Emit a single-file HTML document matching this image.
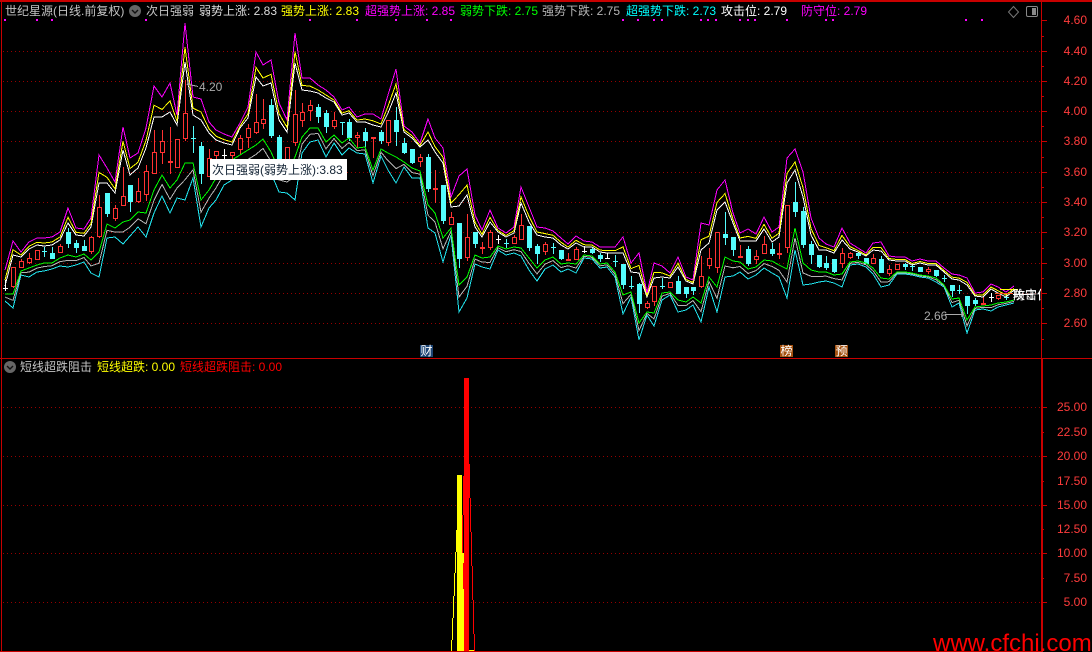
<!DOCTYPE html>
<html><head><meta charset="utf-8"><style>
html,body{margin:0;padding:0;background:#000}
#w{position:relative;width:1092px;height:652px;overflow:hidden;background:#000;font:12px/14px "Liberation Sans","Noto Sans CJK SC",sans-serif}
svg{position:absolute;left:0;top:0}
.d{position:absolute;left:3px;width:1038px;height:1px;background:repeating-linear-gradient(90deg,#960000 0,#960000 1px,#000 1px,#000 4px)}
.t{position:absolute;white-space:pre;line-height:14px;height:14px}
.a{position:absolute;left:1044px;width:43px;text-align:right;color:#ff3c3c;line-height:14px}
.b{position:absolute;width:13px;height:12px;line-height:12px;color:#fff;text-align:center;font-size:12px}
</style></head><body><div id="w">
<div class="d" style="top:51px"></div><div class="d" style="top:81px"></div><div class="d" style="top:111px"></div><div class="d" style="top:141px"></div><div class="d" style="top:172px"></div><div class="d" style="top:202px"></div><div class="d" style="top:232px"></div><div class="d" style="top:263px"></div><div class="d" style="top:293px"></div><div class="d" style="top:323px"></div><div class="d" style="top:407px"></div><div class="d" style="top:456px"></div><div class="d" style="top:505px"></div><div class="d" style="top:553px"></div><div class="d" style="top:602px"></div>
<svg width="1092" height="652" viewBox="0 0 1092 652" shape-rendering="crispEdges">
<g id="g"></g>
<g fill="#ff0">
<rect x="457" y="475" width="5" height="177"/><rect x="456" y="530" width="1" height="22"/><rect x="455" y="552" width="1" height="21"/><rect x="454" y="573" width="1" height="23"/><rect x="453" y="596" width="1" height="22"/><rect x="452" y="618" width="1" height="22"/><rect x="451" y="640" width="1" height="11"/><rect x="462" y="553" width="2" height="99"/><rect x="469" y="650" width="5" height="2"/>
</g>
<g fill="#f00">
<rect x="464" y="378" width="5" height="274"/><rect x="469" y="464" width="1" height="34"/><rect x="470" y="498" width="1" height="34"/><rect x="471" y="532" width="1" height="34"/><rect x="472" y="566" width="1" height="34"/><rect x="473" y="600" width="1" height="34"/><rect x="474" y="634" width="1" height="17"/><rect x="463" y="476" width="1" height="39"/><rect x="462" y="515" width="1" height="38"/><rect x="463" y="563" width="1" height="26"/>
</g>
<g fill="#c80000">
<rect x="0" y="0" width="1092" height="2"/><rect x="1" y="0" width="1" height="652"/><rect x="0" y="358" width="1092" height="1"/><rect x="1041" y="0" width="1" height="358"/><rect x="1041" y="358" width="2" height="294"/><rect x="0" y="651" width="1041" height="1"/>
<path d="M1041 20h6v1h-6zM1041 36h3v1h-3zM1041 51h6v1h-6zM1041 66h3v1h-3zM1041 81h6v1h-6zM1041 96h3v1h-3zM1041 111h6v1h-6zM1041 126h3v1h-3zM1041 141h6v1h-6zM1041 157h3v1h-3zM1041 172h6v1h-6zM1041 187h3v1h-3zM1041 202h6v1h-6zM1041 217h3v1h-3zM1041 232h6v1h-6zM1041 248h3v1h-3zM1041 263h6v1h-6zM1041 278h3v1h-3zM1041 293h6v1h-6zM1041 308h3v1h-3zM1041 323h6v1h-6zM1041 339h3v1h-3z"/>
<path d="M1041 407h6v1h-6zM1041 432h3v1h-3zM1041 456h6v1h-6zM1041 481h3v1h-3zM1041 505h6v1h-6zM1041 529h3v1h-3zM1041 553h6v1h-6zM1041 578h3v1h-3zM1041 602h6v1h-6z"/>
</g>
<g fill="#f0f">
<path d="M4 19h2v2h-2zM36 19h2v2h-2zM51 19h2v2h-2zM145 19h2v2h-2zM309 19h2v2h-2zM356 19h2v2h-2zM395 19h2v2h-2zM426 19h2v2h-2zM450 19h2v2h-2zM622 19h2v2h-2zM637 19h2v2h-2zM653 19h2v2h-2zM661 19h2v2h-2zM700 19h2v2h-2zM707 19h2v2h-2zM715 19h2v2h-2zM739 19h2v2h-2zM747 19h2v2h-2zM754 19h2v2h-2zM786 19h2v2h-2zM825 19h2v2h-2zM832 19h2v2h-2zM965 19h2v2h-2zM981 19h2v2h-2z"/>
</g>
<path d="M187 84L198 86.5M187 84l3 -1M187 84l2 2" stroke="#aaa" fill="none"/>
<path d="M945 314.5H964M964 314.5l-3 -2M964 314.5l-3 2" stroke="#aaa" fill="none"/>
<rect x="995" y="293" width="18" height="1" fill="#ff5020"/>
<rect x="1000" y="289" width="18" height="1" fill="#ff0"/>
<rect x="1013" y="294" width="20" height="1" fill="#fff"/>
<circle cx="135" cy="11" r="6" fill="#666" shape-rendering="auto"/>
<path d="M132 10l3 3 3-3" stroke="#111" stroke-width="1.4" fill="none" shape-rendering="auto"/>
<circle cx="10" cy="367" r="6" fill="#666" shape-rendering="auto"/>
<path d="M7 366l3 3 3-3" stroke="#111" stroke-width="1.4" fill="none" shape-rendering="auto"/>
<path d="M1013.5 6.5l5 5.5-5 5.5-5-5.5z" stroke="#777" fill="none" shape-rendering="auto"/>
<rect x="1026.5" y="6.5" width="11" height="10" rx="1.5" stroke="#888" fill="none" shape-rendering="auto"/>
<rect x="1032" y="8" width="4" height="7" fill="#888"/>
</svg>

<span class="t" style="left:5px;top:4px;color:#c4c4c4">世纪星源(日线.前复权)</span>
<span class="t" style="left:146px;top:4px;color:#c4c4c4">次日强弱</span>
<span class="t" style="left:199px;top:4px;color:#dcdcdc">弱势上涨: 2.83</span>
<span class="t" style="left:281px;top:4px;color:#ff0">强势上涨: 2.83</span>
<span class="t" style="left:365px;top:4px;color:#f0f">超强势上涨: 2.85</span>
<span class="t" style="left:460px;top:4px;color:#0f0">弱势下跌: 2.75</span>
<span class="t" style="left:542px;top:4px;color:#b4b4b4">强势下跌: 2.75</span>
<span class="t" style="left:626px;top:4px;color:#0ff">超强势下跌: 2.73</span>
<span class="t" style="left:721px;top:4px;color:#fff">攻击位: 2.79</span>
<span class="t" style="left:801px;top:4px;color:#f0f">防守位: 2.79</span>

<span class="t" style="left:199px;top:80px;color:#aaa">4.20</span>
<span class="t" style="left:924px;top:309px;color:#aaa">2.66</span>

<div style="position:absolute;left:1013px;top:288px;width:28px;height:14px;overflow:hidden;color:#fff;white-space:pre;line-height:14px"><span style="position:absolute;left:0;top:0">防守位</span><span style="position:absolute;left:0;top:0">攻击位</span></div>

<div style="position:absolute;left:210px;top:159px;width:137px;height:21px;background:#fff;color:#123;line-height:22px;padding-left:2px;box-sizing:border-box;white-space:pre">次日强弱(弱势上涨):3.83</div>

<span class="b" style="left:420px;top:345px;background:#1c4474">财</span>
<span class="b" style="left:780px;top:345px;background:#a4510f">榜</span>
<span class="b" style="left:835px;top:345px;background:#a4510f">预</span>

<span class="t" style="left:20px;top:360px;color:#c4c4c4">短线超跌阻击</span>
<span class="t" style="left:97px;top:360px;color:#ff0">短线超跌: 0.00</span>
<span class="t" style="left:180px;top:360px;color:#f00">短线超跌阻击: 0.00</span>

<span class="a" style="top:13px">4.60</span><span class="a" style="top:44px">4.40</span><span class="a" style="top:74px">4.20</span><span class="a" style="top:104px">4.00</span><span class="a" style="top:134px">3.80</span><span class="a" style="top:165px">3.60</span><span class="a" style="top:195px">3.40</span><span class="a" style="top:225px">3.20</span><span class="a" style="top:256px">3.00</span><span class="a" style="top:286px">2.80</span><span class="a" style="top:316px">2.60</span>
<span class="a" style="top:400px">25.00</span><span class="a" style="top:425px">22.50</span><span class="a" style="top:449px">20.00</span><span class="a" style="top:474px">17.50</span><span class="a" style="top:498px">15.00</span><span class="a" style="top:522px">12.50</span><span class="a" style="top:546px">10.00</span><span class="a" style="top:571px">7.50</span><span class="a" style="top:595px">5.00</span>

<div style="position:absolute;left:933px;top:630px;font:24px/28px 'Liberation Sans',sans-serif;color:#f00;white-space:pre">www.cfchi.com</div>
</div>
<script>
var M=[270,241,252,242,238,238,237,232,208,228,229,218,155,168,182,127,158,153,128,86,97,83,115,23,97,99,122,130,134,137,123,107,52,65,60,103,120,33,78,78,85,90,97,110,107,117,114,114,119,95,69,126,132,143,119,138,148,197,176,169,215,230,210,228,233,227,187,207,227,228,231,238,244,236,241,242,247,247,247,237,263,253,293,263,266,273,257,277,280,223,225,190,180,213,233,229,234,217,232,227,158,149,172,218,238,244,247,228,243,248,253,243,242,256,257,257,261,259,261,261,268,274,275,278,293,292,284,287,292,286];
var S=[16,14,5,7,7,8,8,8,15,7,7,9,28,15,11,23,17,15,20,31,20,29,10,39,18,21,11,10,9,8,5,11,25,21,23,17,12,30,12,13,8,8,5,5,6,5,8,11,8,18,24,6,6,4,21,14,15,10,30,26,12,7,12,4,4,6,16,15,8,9,7,7,5,7,6,5,5,6,6,16,9,20,4,15,11,5,10,4,4,27,18,20,22,10,8,12,7,12,10,10,25,21,25,17,12,6,6,12,6,4,3,7,9,4,4,4,4,4,4,4,4,5,5,7,3,5,5,6,5,4];
var G=[294,294,271,268,265,263,263,258,255,257,254,260,252,224,228,222,220,212,213,190,175,188,180,163,163,200,190,178,165,160,155,150,145,139,152,170,173,157,137,128,128,142,135,143,138,148,147,170,149,153,157,162,168,171,205,213,238,228,285,277,255,258,257,246,249,247,248,258,268,260,257,264,263,264,255,256,264,263,272,295,292,323,312,313,293,292,300,302,297,303,277,287,257,261,262,269,267,260,261,265,269,228,263,270,272,272,275,274,262,261,263,268,278,279,272,272,273,275,276,278,285,299,298,320,307,306,305,303,302,300];
var T=[7,14,4,9,7,8,6,8,12,8,8,13,25,14,9,22,16,15,24,23,21,25,18,37,15,27,18,22,20,20,21,21,21,21,21,22,20,43,16,14,12,15,8,12,10,5,7,13,7,17,26,5,10,7,23,20,24,7,27,21,9,9,12,4,6,6,8,12,13,9,8,8,6,9,3,3,4,4,5,19,5,17,3,13,7,3,12,8,8,19,10,25,20,15,10,10,8,8,12,12,29,22,22,14,10,9,8,13,3,3,4,6,9,6,2,2,2,2,2,4,2,8,5,13,3,3,6,4,3,3];
var C="w,288,288,280,290;r,267,286,267,287;r,261,267,259,267;r,258,262,253,263;r,250,259,250,259;c,251,251,247,256;c,253,258,247,258;r,246,252,244,252;c,232,243,228,247;c,243,247,240,252;c,246,250,240,250;r,237,251,236,253;r,207,236,195,237;c,193,213,193,216;r,208,218,205,220;r,196,205,167,205;c,185,201,185,211;r,191,201,178,202;r,171,194,165,200;r,152,173,130,173;r,141,152,130,163;r,161,161,127,173;r,139,167,139,167;r,113,138,80,140;c,138,139,126,152;c,146,173,142,183;r,158,176,149,176;r,151,155,151,160;w,155,155,149,163;r,152,155,152,160;r,138,149,135,153;r,128,137,124,147;r,122,132,94,133;r,119,123,99,128;c,105,135,99,137;c,137,170,135,170;r,147,175,147,175;r,114,142,90,145;r,112,120,103,126;r,105,110,100,120;c,107,116,104,122;c,113,126,110,132;r,120,126,112,128;c,122,122,122,134;c,122,137,119,140;r,135,137,132,147;c,132,140,128,146;r,137,137,137,157;c,132,140,130,143;r,120,142,120,145;c,120,131,107,145;c,143,152,138,153;c,149,162,149,163;r,157,161,154,166;c,157,188,154,191;r,188,188,170,202;c,185,220,185,223;r,217,224,212,224;c,223,258,223,267;r,237,257,214,260;c,232,243,232,247;r,247,247,242,253;r,232,247,230,249;w,239,239,235,243;c,243,243,239,247;r,237,243,235,243;r,225,239,214,239;c,226,247,226,250;c,246,253,244,263;r,244,251,242,254;c,247,247,243,253;c,250,258,250,259;r,259,259,253,259;r,249,259,247,259;w,251,251,246,252;c,249,252,247,253;c,255,258,253,261;w,258,258,253,258;c,261,261,255,266;c,264,284,264,288;c,286,286,276,288;c,284,303,283,312;r,303,307,301,308;r,286,301,286,305;c,286,286,278,288;r,282,287,282,287;c,281,293,276,293;c,287,293,287,297;c,287,290,287,294;r,276,286,256,287;r,258,265,248,268;r,232,267,232,272;c,234,237,212,244;c,237,249,237,255;r,256,256,245,257;c,249,263,246,265;r,256,259,250,263;r,244,253,236,253;c,249,253,243,255;r,253,253,243,258;r,205,247,205,252;c,202,211,182,216;c,211,244,207,247;c,244,254,241,263;c,255,266,255,267;c,263,267,256,269;c,259,271,259,272;r,253,263,248,267;r,253,257,252,258;c,253,255,252,258;c,258,263,258,263;r,258,263,254,263;c,259,272,256,272;r,269,273,265,275;r,264,269,264,269;c,264,266,263,269;c,266,266,264,270;c,267,271,267,271;r,269,271,267,273;c,270,275,270,276;c,278,278,275,281;c,285,290,285,296;c,290,290,285,293;c,296,305,296,313;c,300,303,298,305;r,303,303,297,303;w,297,297,293,301;r,295,298,295,299;c,297,297,295,299".split(";");
function X(i){return Math.round(5.3+7.82*i)}
var h="",col={r:"#ff3232",c:"#54fcfc",w:"#fff"};
function R(x,y,w,ht,f){return '<rect x="'+x+'" y="'+y+'" width="'+w+'" height="'+ht+'" fill="'+f+'"/>'}
C.forEach(function(s,i){
 var a=s.split(","),t=a[0],o=+a[1],c=+a[2],hi=+a[3],lo=+a[4],x=X(i),f=col[t];
 if(hi<o)h+=R(x,hi,1,o-hi,f);
 if(lo>c)h+=R(x,c,1,lo-c+1,f);
 if(c-o<2){h+=R(x-2,o,5,t=="r"?2:1,f);if(t!="r")h+=R(x,hi,1,lo-hi+1,f);}
 else if(t=="r"){h+='<rect x="'+(x-2)+'.5" y="'+o+'.5" width="4" height="'+(c-o)+'" fill="#000" stroke="'+f+'"/>';}
 else h+=R(x-2,o,5,c-o+1,f);
});
function P(fn,c){var p=[];for(var i=0;i<130;i++)p.push(X(i)+","+fn(i).toFixed(1));return '<polyline fill="none" stroke="'+c+'" points="'+p.join(" ")+'"/>'}
h+=P(function(i){return M[i]+S[i]},"#fff");
h+=P(function(i){return M[i]+.62*S[i]},"#ff0");
h+=P(function(i){return M[i]},"#f0f");
h+=P(function(i){return G[i]+T[i]},"#22e6f0");
h+=P(function(i){return G[i]+.45*T[i]},"#b4b4b4");
h+=P(function(i){return G[i]},"#0f0");
document.getElementById("g").innerHTML=h;
</script>
</body></html>
